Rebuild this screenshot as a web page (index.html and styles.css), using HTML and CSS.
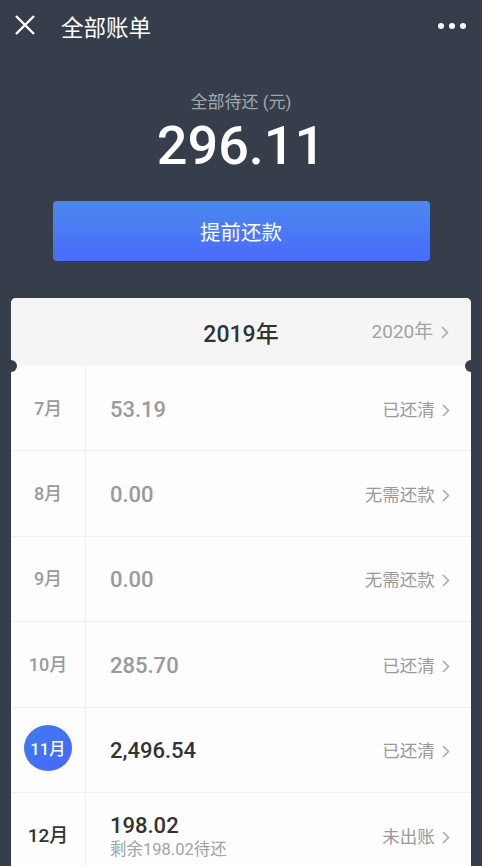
FILE: index.html
```html
<!DOCTYPE html>
<html lang="zh">
<head>
  <meta charset="UTF-8">
  <title>全部账单</title>
  <link rel="stylesheet" href="styles.css">
</head>
<body>

  <div class="top-bar">
    <svg class="close-icon" width="22" height="22" viewBox="0 0 22 22">
      <path d="M2 2 L20 20 M20 2 L2 20" stroke="#fff" stroke-width="2.4" fill="none"/>
    </svg>
    <div class="page-title">全部账单</div>
    <div class="more-dots"><span></span><span></span><span></span></div>
  </div>

  <div class="summary">
    <div class="summary-label">全部待还 (元)</div>
    <div class="summary-amount">296.11</div>
    <button class="repay-btn">提前还款</button>
  </div>

  <div class="bill-card">
    <div class="year-bar">
      <div class="year-current">2019年</div>
      <div class="year-next">2020年 <svg class="chev" width="8" height="13" viewBox="0 0 8 13"><path d="M1 1 L6.5 6.5 L1 12" stroke="#a8a8a8" stroke-width="1.5" fill="none"/></svg></div>
      <span class="notch notch-left"></span>
      <span class="notch notch-right"></span>
    </div>

    <div class="bill-row">
      <div class="month muted">7月</div>
      <div class="bill-info"><div class="amount muted">53.19</div></div>
      <div class="status">已还清 <svg class="chev" width="8" height="13" viewBox="0 0 8 13"><path d="M1 1 L6.5 6.5 L1 12" stroke="#a8a8a8" stroke-width="1.5" fill="none"/></svg></div>
    </div>
    <div class="bill-row">
      <div class="month muted">8月</div>
      <div class="bill-info"><div class="amount muted">0.00</div></div>
      <div class="status">无需还款 <svg class="chev" width="8" height="13" viewBox="0 0 8 13"><path d="M1 1 L6.5 6.5 L1 12" stroke="#a8a8a8" stroke-width="1.5" fill="none"/></svg></div>
    </div>
    <div class="bill-row">
      <div class="month muted">9月</div>
      <div class="bill-info"><div class="amount muted">0.00</div></div>
      <div class="status">无需还款 <svg class="chev" width="8" height="13" viewBox="0 0 8 13"><path d="M1 1 L6.5 6.5 L1 12" stroke="#a8a8a8" stroke-width="1.5" fill="none"/></svg></div>
    </div>
    <div class="bill-row">
      <div class="month muted">10月</div>
      <div class="bill-info"><div class="amount muted">285.70</div></div>
      <div class="status">已还清 <svg class="chev" width="8" height="13" viewBox="0 0 8 13"><path d="M1 1 L6.5 6.5 L1 12" stroke="#a8a8a8" stroke-width="1.5" fill="none"/></svg></div>
    </div>
    <div class="bill-row">
      <div class="month"><span class="month-badge">11月</span></div>
      <div class="bill-info"><div class="amount">2,496.54</div></div>
      <div class="status">已还清 <svg class="chev" width="8" height="13" viewBox="0 0 8 13"><path d="M1 1 L6.5 6.5 L1 12" stroke="#a8a8a8" stroke-width="1.5" fill="none"/></svg></div>
    </div>
    <div class="bill-row">
      <div class="month dark">12月</div>
      <div class="bill-info">
        <div class="amount">198.02</div>
        <div class="remain">剩余198.02待还</div>
      </div>
      <div class="status">未出账 <svg class="chev" width="8" height="13" viewBox="0 0 8 13"><path d="M1 1 L6.5 6.5 L1 12" stroke="#a8a8a8" stroke-width="1.5" fill="none"/></svg></div>
    </div>
  </div>

</body>
</html>
```

FILE: styles.css
```css
body {
  margin: 0;
  background: #363e4c;
  font-family: Roboto, "Noto Sans CJK SC", sans-serif;
  height: 866px;
  overflow: hidden;
}

.top-bar {
  height: 52px;
  display: flex;
  align-items: center;
  padding: 0 14px;
}

.close-icon {
  flex: none;
  margin-top: -2px;
}

.page-title {
  color: #fff;
  font-size: 22.5px;
  margin-left: 25px;
  flex: 1;
}

.more-dots {
  display: flex;
  gap: 5px;
  margin-right: 2px;
}

.more-dots span {
  width: 6px;
  height: 6px;
  border-radius: 50%;
  background: #fff;
}

.summary {
  text-align: center;
  padding-top: 39px;
}

.summary-label {
  color: #a3a8b0;
  font-size: 17px;
  line-height: 22px;
}

.summary-amount {
  color: #fff;
  font-size: 54px;
  font-weight: 500;
  line-height: 60px;
  margin-top: 3px;
}

.repay-btn {
  display: block;
  width: 377px;
  height: 60px;
  margin: 25px auto 0;
  border: none;
  border-radius: 4px;
  background: linear-gradient(to bottom, #4a88ee, #4a6cfb);
  color: #fff;
  font-size: 20.5px;
  font-family: inherit;
}

.bill-card {
  margin: 37px 11px 0;
  background: #fdfdfd;
  border-radius: 5px 5px 0 0;
}

.year-bar {
  position: relative;
  height: 68px;
  background: #f5f5f5;
  border-radius: 5px 5px 0 0;
  display: flex;
  align-items: center;
  justify-content: center;
}

.year-current {
  font-size: 23px;
  font-weight: 500;
  color: #333;
}

.year-next {
  position: absolute;
  right: 22px;
  top: 0;
  line-height: 68px;
  font-size: 19px;
  color: #a3a3a3;
}

.notch {
  position: absolute;
  bottom: -6px;
  width: 12px;
  height: 12px;
  border-radius: 50%;
  background: #363e4c;
}

.notch-left { left: -6px; }
.notch-right { right: -6px; }

.chev {
  margin-left: 3px;
  vertical-align: -1px;
}

.bill-row {
  box-sizing: border-box;
  display: flex;
  align-items: center;
  height: 85.4px;
  border-bottom: 1px solid #f1f1f1;
}

.month {
  width: 75px;
  height: 100%;
  border-right: 1px solid #f1f1f1;
  display: flex;
  align-items: center;
  justify-content: center;
  padding-bottom: 3px;
  box-sizing: border-box;
  font-size: 18px;
  font-weight: 500;
}

.month.muted { color: #9a9a9a; }
.month.dark { color: #333; font-size: 19px; }

.month-badge {
  width: 48px;
  height: 46px;
  border-radius: 50%;
  background: linear-gradient(135deg, #3d7cf0, #4a66fa);
  color: #fff;
  font-size: 16.5px;
  display: flex;
  align-items: center;
  justify-content: center;
}

.bill-info {
  flex: 1;
  padding-left: 24px;
  padding-top: 3px;
}

.amount {
  font-size: 22px;
  font-weight: 500;
  color: #333;
  line-height: 26px;
}

.amount.muted { color: #9a9a9a; }

.remain {
  font-size: 16.5px;
  color: #a3a3a3;
  line-height: 22px;
}

.status {
  font-size: 17.5px;
  color: #9a9a9a;
  padding-right: 21px;
}
```
